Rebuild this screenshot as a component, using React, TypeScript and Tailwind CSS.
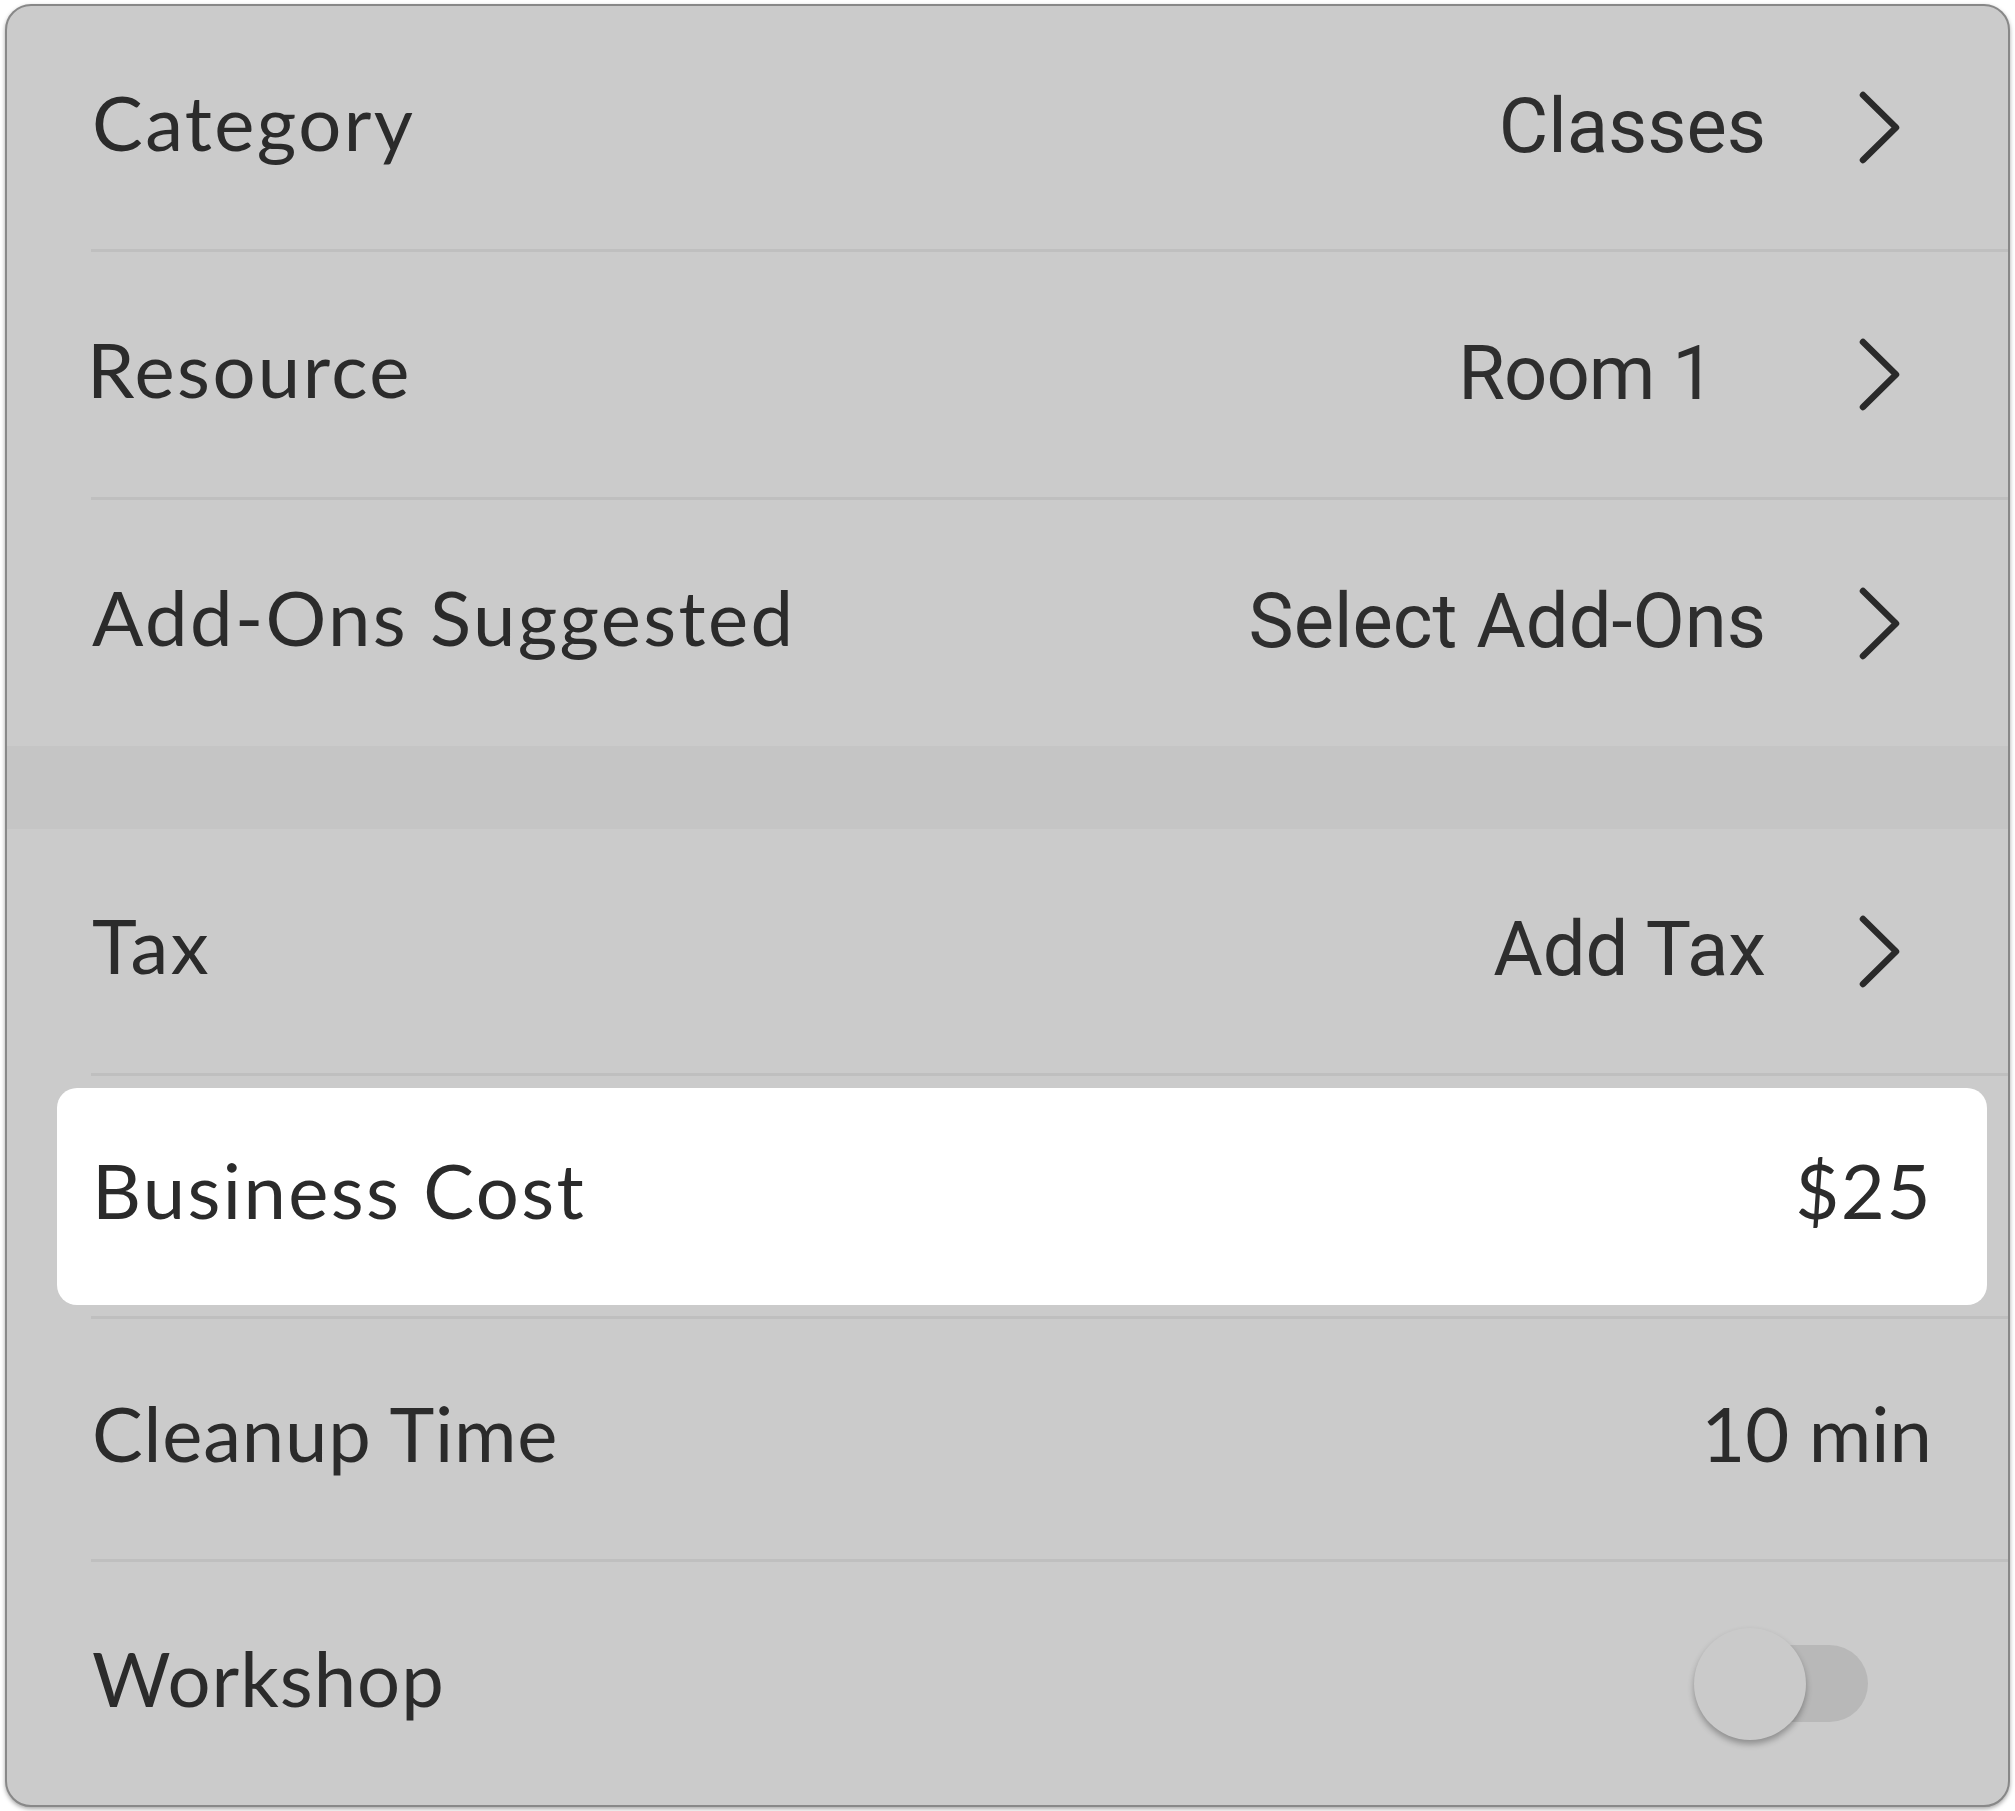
import React from "react";

const labelFont = "font-['Lato','Noto_Sans',sans-serif] text-[#2b2b2b]";
const valueFont = "font-['Roboto','Liberation_Sans',sans-serif] text-[#2e2e2e]";

const Chevron = () => (
  <svg width="43" height="75" viewBox="0 0 43 75" fill="none" className="shrink-0">
    <polyline points="5,5 38,37.5 5,70" stroke="#2a2a2a" strokeWidth="6.5" strokeLinecap="round" strokeLinejoin="round" />
  </svg>
);

const Divider = () => <div className="h-[3px] ml-[84px] bg-[#bfbfbf]" />;

// row that opens a sub screen
const LinkRow = ({
  label,
  value,
  height,
  labelClass = "pl-[85px]",
  valueClass = "",
}: {
  label: string;
  value: string;
  height: string;
  labelClass?: string;
  valueClass?: string;
}) => (
  <div className={`flex items-center ${height} pr-[107px]`}>
    <span className={`${labelFont} ${labelClass} tracking-[2.4px] pb-[12px] text-[76px] leading-none`}>{label}</span>
    <span className={`${valueFont} ml-auto pb-[4px] text-[76px] leading-none ${valueClass}`}>{value}</span>
    <div className="ml-[92px]">
      <Chevron />
    </div>
  </div>
);

export default function App() {
  return (
    <div className="w-[2015px] h-[1811px] bg-white pt-[4px] pl-[5px]">
      <div className="w-[2005px] h-[1803px] rounded-[26px] border-2 border-[#888888] bg-[#cbcbcb] overflow-hidden shadow-[0_2px_4px_rgba(0,0,0,0.35)] flex flex-col">
        <LinkRow label="Category" value="Classes" height="h-[243px]" />
        <Divider />
        <LinkRow label="Resource" value="Room 1" height="h-[245px]" labelClass="pl-[80px]" valueClass="mr-[52px] tracking-[-1px]" />
        <Divider />
        <LinkRow label="Add-Ons Suggested" value="Select Add-Ons" height="h-[246px]" />

        <div className="h-[83px] bg-[#c5c5c5]" />

        <LinkRow label="Tax" value="Add Tax" height="h-[244px]" />
        <Divider />

        <div className="h-[240px] flex items-center pl-[50px] pr-[21px]">
          <div className="w-full h-[217px] bg-white rounded-[20px] flex items-center pl-[35px] pr-[55px]">
            <span className={`${labelFont} tracking-[2.4px] pb-[12px] text-[76px] leading-none`}>Business Cost</span>
            <span className={`${labelFont} tracking-[1.5px] ml-auto pb-[12px] text-[76px] leading-none`}>$25</span>
          </div>
        </div>
        <Divider />

        <div className="h-[240px] flex items-center pl-[85px] pr-[76px]">
          <span className={`${labelFont} tracking-[0.8px] pb-[12px] text-[76px] leading-none`}>Cleanup Time</span>
          <span className={`${labelFont} tracking-[0px] ml-auto pb-[12px] text-[76px] leading-none`}>10 min</span>
        </div>
        <Divider />

        <div className="flex-1 flex items-center pl-[85px] pr-[140px]">
          <span className={`${labelFont} tracking-[1px] pb-[12px] text-[76px] leading-none`}>Workshop</span>
          <div className="ml-auto relative w-[174px] h-[112px] flex items-center">
            <div className="ml-auto w-[160px] h-[77px] rounded-full bg-[#b8b8b8]" />
            <div className="absolute left-0 top-0 w-[112px] h-[112px] rounded-full bg-[#cacaca] shadow-[0_4px_6px_rgba(0,0,0,0.3)]" />
          </div>
        </div>
      </div>
    </div>
  );
}
